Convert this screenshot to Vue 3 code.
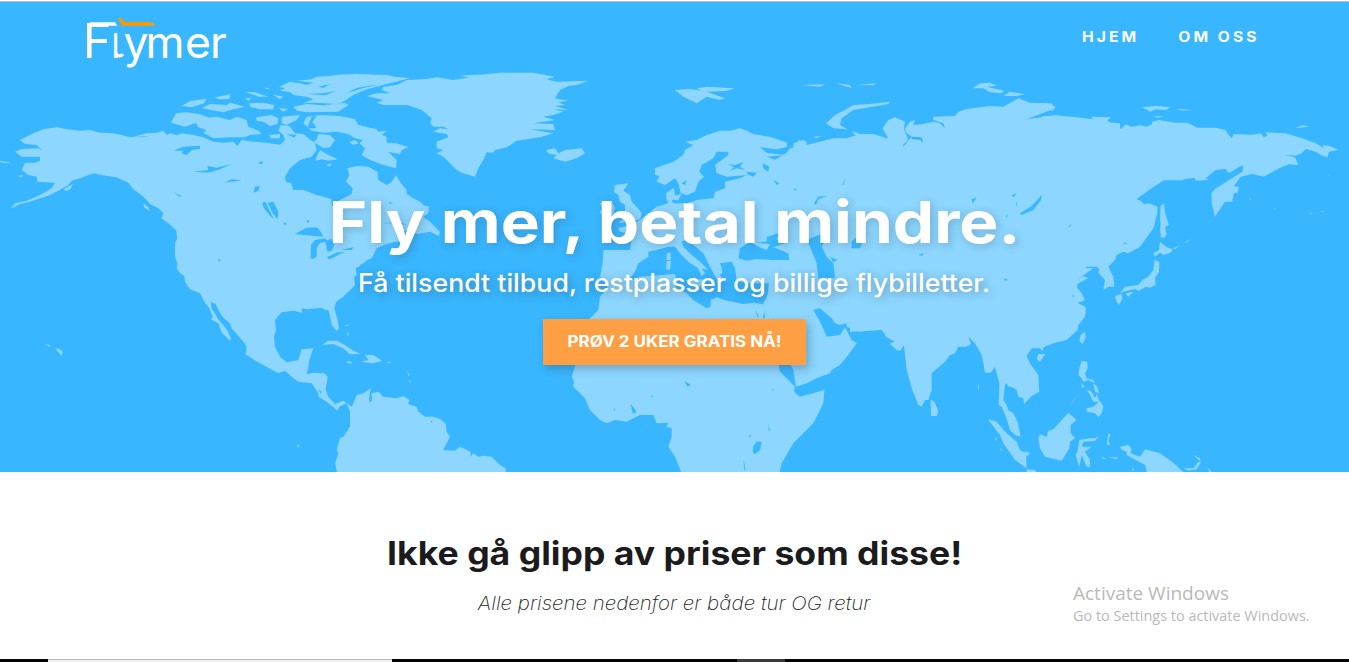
<script setup>
// Each tile of the map has its own origin and is drawn at three units per pixel.
const land = [
  { x: 0, y: 0, d: [
    'M60,420 100,400 130,388 170,381 200,388 240,392 270,390 300,398 340,400 390,411 440,410 465,400 490,392 500,405 512,400 530,406 545,400 580,405 610,412 640,425 670,428 700,425 712,438 725,420 760,425 800,428 840,434 855,420 850,405 835,392 842,375 868,378 885,400 910,402 925,415 945,430 950,450 935,470 900,480 870,505 855,530 858,545 873,550 880,570 910,570 950,585 994,597 996,625 1005,633 1020,720 534,720 530,692 505,670 484,655 490,640 475,625 450,612 430,590 400,568 385,548 350,532 320,528 280,520 240,535 215,542 205,555 180,570 150,585 90,605 60,612 33,626 45,610 80,602 120,585 155,565 165,548 112,545 110,530 85,525 65,510 75,488 105,488 120,482 120,470 65,470 45,455 65,447 115,445 125,450 110,435 75,432Z',
    'M513,368 528,340 560,337 600,343 625,352 590,368 555,380Z M588,370 610,355 650,350 690,360 710,350 740,360 745,380 775,392 785,402 750,405 735,412 690,412 640,415 610,398 620,390 595,382Z',
    'M545,318 570,303 620,296 612,310 575,322Z M605,325 630,312 680,315 690,308 735,320 700,328 670,337Z M645,292 690,283 688,297 655,298Z M735,275 765,277 805,290 775,290Z M735,295 755,293 745,302Z M748,310 790,308 822,315 820,328 780,328 750,320Z M768,352 815,345 835,355 832,372 810,378 790,365 770,362Z M817,283 850,290 840,298Z M836,325 865,326 850,335Z M845,350 900,345 890,360 860,375 845,370Z M795,263 812,265 800,268Z M808,405 840,402 840,415 812,415Z',
    'M0,482 32,488 20,490 0,486Z M52,528 70,525 65,532Z M190,568 218,553 212,566 198,573Z M430,610 445,622 450,633 432,622Z M400,410 440,400 480,398 450,408Z',
  ] },
  { x: 240, y: 60, d: [
    'M120,392 160,390 215,405 272,418 275,440 300,420 335,402 338,385 318,365 328,345 322,325 350,318 385,320 412,335 415,360 440,375 455,365 468,346 482,368 500,390 500,402 520,415 545,428 550,436 567,440 565,460 550,470 570,485 600,515 597,528 570,515 535,522 500,510 470,525 510,530 500,545 465,545 440,552 410,565 395,595 365,605 360,618 347,625 350,645 338,655 340,680 290,725 120,725Z',
    'M190,190 200,170 240,165 300,168 345,178 355,195 410,208 415,215 440,212 425,225 440,230 440,248 470,250 505,262 485,270 480,283 445,275 470,300 468,325 430,315 390,300 365,285 375,265 358,250 368,240 345,235 325,222 290,215 250,218 215,212Z',
    'M118,80 150,65 180,70 200,75 220,68 170,62 215,58 230,50 270,48 290,44 350,42 440,45 465,50 510,55 440,72 380,88 340,105 310,125 290,132 220,128 190,130 220,118 200,110 160,105 150,96 120,92 135,85Z',
    'M160,140 200,132 250,136 315,128 325,135 295,155 200,157 170,152Z M220,245 230,240 235,222 270,225 285,240 270,262 250,265 240,258Z M225,303 230,290 240,270 260,282 293,298 265,302 245,298Z M328,245 345,240 355,250 340,255Z M258,315 275,310 270,320Z',
    'M380,108 410,100 450,100 425,90 430,80 470,75 500,60 560,57 590,52 640,60 690,52 660,48 680,45 720,44 780,38 880,38 945,50 920,58 950,65 1045,62 1010,75 985,78 960,90 945,115 985,122 955,127 975,135 945,138 985,150 940,148 970,155 940,165 910,170 945,180 880,190 940,192 945,210 870,208 940,220 900,232 830,242 800,262 765,270 760,278 740,277 730,300 715,325 705,350 680,343 665,338 650,330 620,300 610,290 590,280 610,270 590,265 590,245 625,232 620,222 580,215 600,205 625,208 610,200 580,200 570,188 575,175 545,150 500,135 430,135 410,128 430,120Z',
    'M918,270 945,265 955,280 975,270 1000,268 1025,265 1035,280 1010,295 975,305 940,295 950,285 925,280Z',
  ] },
  { x: 540, y: 60, d: [
    'M1090,250 1040,235 1000,222 965,222 940,240 900,235 850,245 800,262 798,252 775,238 780,260 750,265 740,278 705,299 680,290 735,285 680,278 660,262 710,268 740,262 742,248 690,230 640,222 620,212 600,205 570,212 540,212 500,225 470,240 435,245 460,255 435,270 430,285 400,305 345,325 345,345 358,348 350,365 375,375 405,355 415,370 422,400 440,405 465,395 475,365 492,350 478,335 485,315 520,295 530,275 565,275 565,285 545,300 525,315 530,340 560,350 620,345 600,355 555,365 555,385 525,395 520,415 490,418 470,420 440,430 400,430 395,422 420,405 405,410 400,385 378,400 385,430 350,440 325,460 300,480 270,495 235,505 240,515 265,520 275,540 270,570 190,570 188,610 180,650 215,672 260,668 285,635 295,610 325,590 325,575 350,570 385,560 405,560 420,580 445,605 475,625 485,650 465,668 495,640 485,625 505,630 480,605 455,585 430,560 425,545 440,540 460,555 490,580 505,610 520,640 535,665 550,660 540,645 550,635 540,610 575,605 585,625 590,660 620,670 1090,670Z',
    'M225,375 265,370 250,392 270,405 275,425 290,440 305,460 300,478 270,485 235,490 250,475 240,465 255,455 255,435 240,425 235,405 222,395Z M180,430 215,425 225,445 218,465 178,460 188,445Z M378,405 400,385 405,400 395,425 380,420Z M398,408 425,402 415,420 402,420Z',
    'M405,90 450,87 485,92 470,85 500,80 585,85 560,93 500,95 555,115 540,120 500,110 470,130 430,110Z M785,75 855,73 840,80Z M890,70 930,75 935,83 920,80Z M945,76 1010,70 1000,75Z M858,190 885,165 915,150 940,135 990,132 1050,125 1045,132 940,150 905,175 900,195 922,208 880,205Z M820,230 845,228 830,235Z M935,213 955,220 965,232 945,225Z M380,580 392,578 392,600 380,600Z M380,603 393,603 390,630 378,628Z',
  ] },
  { x: 800, y: 60, d: [
    'M-20,250 10,240 20,245 20,255 100,235 140,235 180,222 230,226 270,242 272,258 305,266 335,230 320,220 315,205 330,185 345,180 340,195 370,192 400,185 420,190 435,205 430,190 400,180 400,170 465,168 475,155 500,147 570,138 610,140 655,115 690,128 755,130 765,145 680,178 770,165 830,178 900,185 960,190 960,540 -20,540Z',
    'M247,205 265,180 285,172 315,185 312,205 325,240 300,262 270,255 262,230Z M518,85 540,70 570,68 590,78 560,80 612,92 605,100 570,97 550,85Z M610,108 630,95 675,103 650,108Z',
  ] },
  { x: 1049, y: 0, d: [
    'M-20,348 25,348 70,350 130,358 165,362 190,378 215,386 232,373 245,380 275,376 292,380 310,372 308,366 330,360 380,368 415,368 445,383 500,383 530,390 535,400 548,415 555,402 610,404 635,400 645,412 655,407 650,397 710,400 760,415 800,430 825,445 820,436 840,437 868,449 840,455 835,472 815,465 800,455 770,447 760,458 740,467 705,465 738,472 748,495 720,493 690,505 645,530 610,522 575,530 555,558 570,562 565,580 555,578 550,605 528,605 498,650 488,610 487,580 497,568 540,540 580,515 583,497 570,500 540,520 530,507 500,510 470,535 480,540 440,542 438,534 410,536 400,541 345,541 300,570 262,598 275,602 285,613 300,610 325,620 325,637 315,680 285,720 -20,720Z',
    'M279,322 320,318 365,322 350,330 320,328 305,335Z M380,326 430,330 400,332Z M312,347 345,350 325,353Z M740,384 760,376 782,380Z M0,315 20,320 12,330 0,332Z M128,350 185,352 175,362 190,372 130,360Z M335,618 345,610 348,640 360,675 350,680 340,690 350,712 335,712 338,680 333,660Z M475,670 492,655 485,662Z',
    'M600,593 607,598 603,600Z M675,623 681,625 676,627Z M778,638 792,639 785,642Z M815,634 828,633 820,636Z M835,522 843,526 837,526Z',
  ] },
  { x: 150, y: 220, d: [
    'M78,30 82,55 75,70 75,110 82,130 80,145 90,160 103,168 105,185 120,208 150,220 165,248 178,265 188,290 182,298 205,310 215,338 240,362 243,355 230,328 205,298 185,265 182,245 197,252 205,270 217,290 240,310 245,325 280,365 290,380 287,403 305,415 330,430 385,460 405,452 430,475 445,485 485,490 505,520 505,530 530,545 563,572 568,560 590,550 600,575 600,620 580,650 570,655 560,690 565,700 555,730 562,760 1067,760 1067,745 1050,735 1025,710 1000,707 985,710 970,700 962,710 962,695 930,680 915,692 880,690 900,650 890,635 888,612 870,597 850,590 825,590 805,575 800,560 775,552 778,540 760,528 740,535 700,530 685,515 665,520 665,545 658,530 662,505 640,520 620,525 610,550 605,560 580,542 555,552 535,530 527,508 533,470 523,460 490,458 470,463 475,440 478,420 490,385 455,388 445,420 410,427 390,410 375,380 372,350 378,330 375,300 395,277 430,272 455,278 455,265 470,268 515,263 525,270 535,270 540,290 545,315 560,333 567,325 563,300 553,265 560,240 575,235 600,210 615,195 612,170 610,155 625,135 640,130 670,105 680,60 600,-20Z',
    'M516,375 535,362 560,362 585,375 610,392 632,402 600,403 580,385 550,372Z M645,405 670,405 697,423 668,430 632,425 655,420Z M587,425 600,424 608,430 595,430Z M710,425 728,426 715,430Z M590,340 595,335 596,350Z M640,385 648,390Z M772,452 778,465 775,470Z M780,478 781,488 777,485Z M442,672 449,678 442,683Z M583,315 600,315 590,318Z',
  ] },
  { x: 0, y: 320, d: [
    'M135,72 150,75 148,80Z M165,85 180,88 188,95 185,108 178,100Z',
  ] },
  { x: 540, y: 240, d: [
    'M205,125 250,130 300,110 405,102 408,115 400,130 410,145 440,160 460,180 500,205 512,200 512,180 530,172 560,182 610,192 640,188 668,192 685,235 690,300 715,370 720,395 765,440 762,455 780,470 853,450 850,490 820,550 760,610 725,670 718,700 425,700 405,650 385,620 395,590 395,565 380,560 385,548 350,550 340,525 300,525 260,545 225,540 200,550 180,540 150,510 135,475 100,440 102,425 95,410 105,378 110,350 105,300 120,270 150,235 175,210 180,170 200,148Z',
    'M600,40 585,70 590,100 600,125 640,130 670,120 687,125 683,165 668,195 685,235 720,310 760,390 768,440 800,430 830,415 870,400 875,390 900,375 925,345 950,310 935,300 915,262 900,285 860,290 845,255 820,210 840,205 875,235 885,250 900,255 920,250 920,260 960,275 1000,270 1025,270 1070,305 1050,308 1080,333 1090,318 1110,320 1110,-30 600,-30Z',
    'M435,120 490,118 480,140Z M1172,485 1178,480 1194,510 1188,528 1175,528Z',
  ] },
  { x: 860, y: 220, d: [
    'M-30,-30 890,-30 885,0 880,25 840,80 805,100 790,95 770,105 765,120 745,140 760,170 763,200 745,200 730,210 735,180 715,158 718,148 710,140 680,140 660,170 645,155 632,158 635,148 680,128 672,145 700,145 650,180 670,168 685,175 655,190 650,200 665,220 675,240 655,250 678,262 675,290 655,315 653,330 620,360 585,368 550,382 548,395 540,385 515,385 500,408 510,430 535,465 538,515 515,528 492,552 490,535 475,530 470,510 455,500 445,500 440,490 435,495 430,540 440,555 445,570 460,580 473,605 482,650 465,645 450,630 438,590 425,560 416,555 418,490 405,440 392,458 375,458 370,430 365,405 345,370 325,350 333,372 320,380 295,380 285,400 270,405 255,425 215,460 215,510 205,540 195,540 185,560 175,555 155,505 140,450 132,375 120,392 110,390 90,372 105,365 80,352 65,330 -30,335Z',
    'M903,0 913,0 925,15 915,20 920,45 905,55 900,30Z M900,65 920,82 938,88 932,98 910,105 900,98 885,110 880,100 897,90Z M883,120 898,125 897,155 885,175 887,195 870,203 858,200 835,212 825,207 790,215 780,220 795,200 835,195 850,178 865,170 880,150Z M765,228 785,222 787,235 778,255 770,245Z M797,220 820,215 805,230Z M675,335 677,350 668,372 658,362 662,345Z M535,402 556,402 540,425 530,417Z M665,422 682,425 683,445 675,460 680,475 700,480 705,490 685,480 670,485 665,475 655,465 658,445Z M628,560 655,520 640,545Z M680,565 700,560 720,542 730,560 725,580 715,592 705,580 680,575Z M700,490 712,500 718,520 705,515Z M680,508 695,515 705,535 710,522 718,545 700,545 690,525Z M664,490 675,500 665,503Z',
    'M212,540 225,548 235,575 230,588 213,588Z M383,597 410,605 440,640 470,665 480,690 498,700 500,745 465,720 430,670 420,645Z M535,655 540,643 560,650 565,632 580,628 625,578 650,600 632,615 632,640 645,655 630,665 628,685 605,722 555,710 540,685Z M652,695 658,660 690,655 705,655 717,647 705,663 670,665 665,680 695,680 675,695 690,720 690,740 680,740 665,705 658,742 647,705Z M745,640 752,645 745,660 750,675 740,675Z M780,680 805,675 815,688 812,700 840,710 855,688 900,700 940,728 970,756 860,756 855,735 800,705 800,695 785,690Z M970,745 1000,745 1015,725 1023,727 1010,748 985,752Z M1042,740 1055,756 1048,756Z M500,748 525,750 530,756 500,756Z M725,712 738,715 728,718Z M745,712 775,712 770,717Z M1000,705 1020,715 1022,725Z M357,490 356,510 353,505Z M404,652 412,658 408,662Z M420,683 427,690 423,692Z M495,692 510,700 500,710Z M940,85 960,75 945,88Z M975,66 995,55 978,68Z M816,745 822,745 818,756Z',
  ] },
]

const water = [
  { x: 0, y: 0, d: [
    'M520,452 550,440 600,437 600,447 575,450 560,465 545,460 550,452Z M580,515 625,510 622,497 650,503 695,492 660,508 625,518Z M675,548 695,538 725,541 695,545Z M760,578 765,560 780,558 775,572Z M773,488 790,484 785,493Z M787,608 797,605 805,625 822,658 808,645 790,622Z M803,608 820,605 835,635 833,658 818,640Z M850,668 860,668 855,678Z M918,662 928,660 925,670Z M523,578 545,588 538,590Z M925,375 935,350 950,347 937,365 950,385 925,385Z',
  ] },
  { x: 240, y: 60, d: [
    'M165,522 200,503 232,502 245,520 250,530 215,527Z M212,595 213,555 225,540 255,535 262,545 240,548 230,565 230,590 218,597Z M255,542 275,537 283,555 275,572 262,575Z M260,592 290,578 315,575 285,590 268,598Z M302,570 340,562 335,570Z M425,490 480,485 500,495 470,490Z M445,425 460,430 450,432Z M140,222 170,225 162,233Z M205,102 250,100 290,92 255,106Z M235,80 270,72 250,84Z M320,100 370,84 420,72 350,84Z',
  ] },
  { x: 540, y: 60, d: [
    'M595,595 600,565 630,545 655,560 680,570 690,553 650,548 710,540 735,550 700,562 745,580 748,600 700,600 650,597 620,602Z M680,530 717,520 710,540 680,545Z M800,540 850,520 860,535 845,560 860,590 880,610 885,655 835,655 830,610 810,560Z M870,590 893,600 880,607Z M935,545 950,530 970,540 960,565 935,565Z M620,335 650,338 640,350 622,342Z M668,310 688,320 685,335 670,325Z M700,360 718,370 710,375Z M565,312 585,316 610,305 600,320 615,330 590,325 570,332 582,322Z M822,430 835,410 860,408 835,418 828,435Z M908,375 914,355 912,375Z M425,370 440,360 435,375Z M760,385 770,388 765,393Z M545,625 580,620 580,660 550,655Z',
  ] },
  { x: 800, y: 60, d: [
    'M660,460 695,438 725,405 723,420 700,450 665,465Z M618,470 624,462 621,475Z M635,405 650,400 640,412Z M515,418 530,412 518,430Z M650,425 652,440 648,432Z M355,584 373,580 365,588Z M803,500 815,492 810,500Z M612,655 622,658 615,662Z M335,230 365,232 370,250 360,240 335,238Z',
  ] },
  { x: 150, y: 220, d: [
    'M203,115 212,120 208,126Z M505,508 515,515 512,522Z M843,602 848,605 844,609Z M657,530 666,533 664,546 658,545Z',
  ] },
  { x: 540, y: 240, d: [
    'M645,210 655,225 655,236Z M675,215 674,236 668,232Z M640,618 650,605 665,605 660,630 645,643 638,635Z M610,655 617,690 613,690Z M685,548 690,575 686,570Z M625,590 635,582 630,592Z M433,423 445,430 453,435 442,440Z M272,492 287,510 288,520 278,520Z M697,447 703,450 697,452Z M222,502 227,513 222,510Z M336,462 338,475 334,470Z',
  ] },
  { x: 860, y: 220, d: [
    'M792,67 800,70 795,75Z M636,225 643,228 640,232Z M432,175 443,180 436,182Z M655,245 670,247 660,252Z',
  ] },
]
</script>

<template>
  <div class="page">
    <div class="topline"></div>
    <section class="hero">
      <svg class="map" viewBox="0 2 1349 470" aria-hidden="true">
        <g fill="#8cd6ff">
          <g v-for="(t, i) in land" :key="'l' + i" :transform="`translate(${t.x} ${t.y}) scale(0.33333)`">
            <path v-for="(d, j) in t.d" :key="j" :d="d" />
          </g>
        </g>
        <g fill="#38b6ff">
          <g v-for="(t, i) in water" :key="'w' + i" :transform="`translate(${t.x} ${t.y}) scale(0.33333)`">
            <path v-for="(d, j) in t.d" :key="j" :d="d" />
          </g>
        </g>
      </svg>

      <header class="bar">
        <svg class="logo" viewBox="0 0 145 56" width="145" height="56" role="img" aria-label="Flymer">
          <text class="logo-text" y="42.5" fill="#fff" font-size="44.5"><tspan x="-1.200" font-size="48.5">F</tspan><tspan x="27.5" font-size="33.5">l</tspan><tspan x="39.5 61.500 101 126">ymer</tspan></text>
          <path d="M6 7.200H31.200L33 10.800H6Z" fill="#fff" />
          <path d="M31.800 37Q31.800 40.900 35.200 40.900Q37.500 40.900 39 39.200" fill="none" stroke="#fff" stroke-width="3.200" />
          <path d="M34.300 3H37.300L40.700 6.900H65.500Q69 7.500 72 10.800H37.600Z" fill="#ff9800" />
        </svg>
        <nav class="nav">
          <a>HJEM</a>
          <a>OM OSS</a>
        </nav>
      </header>

      <div class="pitch">
        <h1>Fly mer, betal mindre.</h1>
        <p>Få tilsendt tilbud, restplasser og billige flybilletter.</p>
        <button type="button"><span>PRØV 2 UKER GRATIS NÅ!</span></button>
      </div>
    </section>

    <section class="prices">
      <h2>Ikke gå glipp av priser som disse!</h2>
      <p>Alle prisene nedenfor er både tur OG retur</p>
    </section>

    <div class="activate">
      <div class="activate-title">Activate Windows</div>
      <div class="activate-text">Go to Settings to activate Windows.</div>
    </div>

    <div class="taskbar">
      <div class="search"></div>
      <div class="task"></div>
    </div>
  </div>
</template>

<style>
body { margin: 0; overflow: hidden; }
</style>

<style scoped>
.page {
  position: relative;
  display: flex;
  flex-direction: column;
  width: 1349px;
  height: 662px;
  overflow: hidden;
  background: #fff;
  font-family: Inter, "Open Sans", sans-serif;
}
.topline { box-sizing: border-box; height: 2px; border-bottom: 1px solid #b3bcc1; flex: none; }
.hero {
  position: relative;
  height: 470px;
  flex: none;
  overflow: hidden;
  background: #38b6ff;
  color: #fff;
}
.map { position: absolute; inset: 0; width: 1349px; height: 470px; }
.bar {
  position: relative;
  display: flex;
  justify-content: space-between;
  box-sizing: border-box;
  height: 72px;
  padding: 13px 90px 0 84px;
}
.logo { display: block; overflow: visible; }
.logo-text { font-family: Inter, sans-serif; font-weight: 370; }
.nav {
  display: flex;
  gap: 35px;
  padding-top: 13px;
  font-size: 14px;
  line-height: 18px;
  font-weight: 700;
  letter-spacing: 2.7px;
  white-space: nowrap;
  transform: scaleX(1.12);
  transform-origin: right center;
}
.pitch { position: relative; display: flex; flex-direction: column; align-items: center; padding-top: 112px; }
h1, h2, p { margin: 0; white-space: nowrap; }
h1 { font-size: 58px; line-height: 72px; font-weight: 700; transform: scaleX(1.132); text-shadow: 2px 2px 8px rgba(46, 61, 73, .25); }
.pitch p { margin-top: 7px; font-size: 25.200px; line-height: 36px; font-weight: 500; transform: scaleX(1.06); text-shadow: 2px 2px 8px rgba(46, 61, 73, .4); }
button {
  width: 263px;
  height: 46px;
  margin-top: 18px;
  padding: 0;
  border: 0;
  background: #ff9f43;
  color: #fff;
  font: 700 15.500px/46px Inter, sans-serif;
  white-space: nowrap;
  box-shadow: 3px 4px 8px rgba(46, 61, 73, .3);
}
button span { display: inline-block; transform: scaleX(1.097); }
.prices { display: flex; flex: 1; flex-direction: column; align-items: center; padding-top: 61px; }
h2 { font-size: 32px; line-height: 42px; font-weight: 700; color: #1b1b1d; transform: scaleX(1.112); }
.prices p { margin-top: 14px; font-size: 18.500px; line-height: 28px; font-style: italic; font-weight: 250; color: #222; transform: scaleX(1.108); }
.activate { position: absolute; left: 1073px; top: 580px; color: #b9b9b9; font-family: "Open Sans", sans-serif; white-space: nowrap; }
.activate-title { font-size: 19px; line-height: 26px; }
.activate-text { font-size: 14.450px; line-height: 20px; }
.taskbar { display: flex; height: 3px; flex: none; background: #060304; }
.search { box-sizing: border-box; width: 344px; margin-left: 48px; border-top: 1px solid #b8b8b8; background: #f1f1f1; }
.task { width: 48px; margin-left: 345px; background: #3d3b3c; }
</style>
